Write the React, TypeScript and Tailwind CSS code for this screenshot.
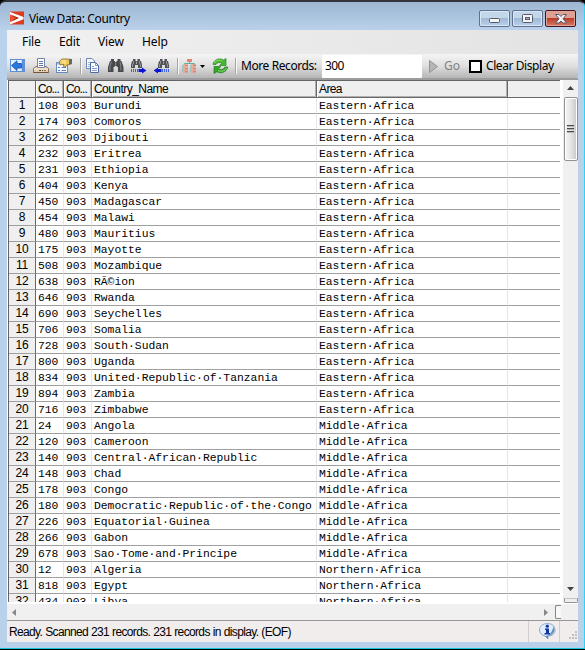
import React from "react";

const rows: [string, string, string][] = [
  ["108", "Burundi", "Eastern·Africa"],
  ["174", "Comoros", "Eastern·Africa"],
  ["262", "Djibouti", "Eastern·Africa"],
  ["232", "Eritrea", "Eastern·Africa"],
  ["231", "Ethiopia", "Eastern·Africa"],
  ["404", "Kenya", "Eastern·Africa"],
  ["450", "Madagascar", "Eastern·Africa"],
  ["454", "Malawi", "Eastern·Africa"],
  ["480", "Mauritius", "Eastern·Africa"],
  ["175", "Mayotte", "Eastern·Africa"],
  ["508", "Mozambique", "Eastern·Africa"],
  ["638", "RÃ©ion", "Eastern·Africa"],
  ["646", "Rwanda", "Eastern·Africa"],
  ["690", "Seychelles", "Eastern·Africa"],
  ["706", "Somalia", "Eastern·Africa"],
  ["728", "South·Sudan", "Eastern·Africa"],
  ["800", "Uganda", "Eastern·Africa"],
  ["834", "United·Republic·of·Tanzania", "Eastern·Africa"],
  ["894", "Zambia", "Eastern·Africa"],
  ["716", "Zimbabwe", "Eastern·Africa"],
  ["24", "Angola", "Middle·Africa"],
  ["120", "Cameroon", "Middle·Africa"],
  ["140", "Central·African·Republic", "Middle·Africa"],
  ["148", "Chad", "Middle·Africa"],
  ["178", "Congo", "Middle·Africa"],
  ["180", "Democratic·Republic·of·the·Congo", "Middle·Africa"],
  ["226", "Equatorial·Guinea", "Middle·Africa"],
  ["266", "Gabon", "Middle·Africa"],
  ["678", "Sao·Tome·and·Principe", "Middle·Africa"],
  ["12", "Algeria", "Northern·Africa"],
  ["818", "Egypt", "Northern·Africa"],
  ["434", "Libya", "Northern·Africa"],
];

const svgProps = { className: "block shrink-0", shapeRendering: "geometricPrecision" as const };

function Logo() {
  return (
    <svg {...svgProps} width="15" height="15" viewBox="0 0 15 15">
      <rect x="0" y="0.5" width="14" height="13" fill="#dd3a22" />
      <path d="M0 1L5 7L0 13Z" fill="#f0693c" />
      <path d="M0.5 2.2L12.2 7L0.5 12.4L4.6 7.2Z" fill="#9e1f12" />
      <path d="M0 1L13.5 6V8.2L0 13.5V11.3L9 7.1L0 3.2Z" fill="#fff" />
      <path d="M0 4L6.5 7.1L0 10.6Z" fill="#e8502e" />
    </svg>
  );
}

function BackIcon() {
  return (
    <svg {...svgProps} width="16" height="14" viewBox="0 0 16 14">
      <rect x="0.5" y="0.5" width="14" height="12" fill="#a9cbf2" stroke="#5b8fd6" />
      <rect x="12" y="1" width="3" height="12" fill="#5f8fdc" />
      <rect x="1" y="1" width="10.5" height="11" fill="#e3effb" />
      <path d="M1.5 6.5L7 1.8V4.5H11.5V9H7V11.6Z" fill="#2878dc" stroke="#1454a8" strokeWidth="0.8" />
    </svg>
  );
}

function PrinterIcon() {
  return (
    <svg {...svgProps} width="17" height="16" viewBox="0 0 17 16">
      <path d="M3 8.5H13L15.5 10.5V14.5H.5V10.5Z" fill="#e2cfb4" stroke="#87705c" />
      <path d="M4.5 9.5V.5H11.5V9.5Z" fill="#fff" stroke="#7484ad" />
      <path d="M6 3.5H10M6 5.5H10M6 7.5H10" stroke="#6377ac" />
      <path d="M1 11H15" stroke="#fff5df" />
      <path d="M.5 14.5H15.5" stroke="#71533d" />
      <path d="M6 12.5H8M9 12.5H10" stroke="#5b4b3c" />
      <rect x="11" y="12" width="2" height="1" fill="#c55a31" />
    </svg>
  );
}

function PropertiesIcon() {
  return (
    <svg {...svgProps} width="17" height="16" viewBox="0 0 17 16">
      <rect x=".5" y="4.5" width="11" height="10" fill="#f6faff" stroke="#6689be" />
      <path d="M1 5.5H11" stroke="#93b5e8" strokeWidth="2" />
      <path d="M2 9.5H4M5.5 9.5H10M2 12.5H4M5.5 12.5H10" stroke="#5281c9" />
      <path d="M3 4L6 1H11L15.5 1.5V6L11 7L9 9L7 8L8 6L4 7Z" fill="#f0c65f" stroke="#876936" strokeWidth=".8" />
      <path d="M5 3H10M6 5H10" stroke="#fff1a7" />
      <path d="M13 1H16V6H13Z" fill="#606c68" />
    </svg>
  );
}

function CopyIcon() {
  return (
    <svg {...svgProps} width="15" height="16" viewBox="0 0 15 16">
      <path d="M.5.5H6L8.5 3V10.5H.5Z" fill="#f4f8ff" stroke="#6d84b4" />
      <path d="M2 4.5H5M2 6.5H5M2 8.5H4" stroke="#9fb2d8" />
      <path d="M4.5 4.5H9.5L12.5 7.5V14.5H4.5Z" fill="#f8fbff" stroke="#50699f" />
      <path d="M9.5 4.5V7.5H12.5M6 8.5H8M6 10.5H11M6 12.5H11" fill="none" stroke="#8299c8" />
    </svg>
  );
}

function BinocularsIcon() {
  return (
    <svg {...svgProps} width="16" height="15" viewBox="0 0 16 15">
      <path d="M3 0H6V2H7V3H8.5V2H9.5V0H12.5V2H13.5L15.5 8V13H10V8H8.8V7H6.7V8H5.5V13H0V8L2 2H3Z" fill="#47494d" />
      <path d="M3.5 2.5L2 7V11.5M12 2.5L12.8 7V11.5" fill="none" stroke="#85888c" />
      <path d="M7.7 3.5V6.5" stroke="#8d9095" />
    </svg>
  );
}

function SmallBinoculars() {
  return (
    <g>
      <path d="M2 0H4.5V2H6.5V0H9V2H10L11 6V9H7V6H4V9H0V6L1 2H2Z" fill="#505256" />
      <path d="M2.5 2V4L1.5 6V8M8.5 2V4L9.5 6V8" fill="none" stroke="#a5a8ac" strokeWidth=".8" />
      <path d="M5.5 2.5V5" stroke="#b4b6ba" strokeWidth=".8" />
    </g>
  );
}

function SeekIcon({ back = false }: { back?: boolean }) {
  return (
    <svg {...svgProps} width="16" height="16" viewBox="0 0 16 16">
      <g transform={back ? "translate(4 1)" : "translate(0 1)"}><SmallBinoculars /></g>
      <g transform={back ? "translate(15 0) scale(-1 1)" : undefined}>
        <path d="M0 11H1V14H0ZM2 11H3V14H2ZM4 11H5V14H4ZM6 11H7V14H6Z" fill="#3f63dc" />
        <path d="M7.500 11H11V9.500L15.500 12.500L11 15.500V14H7.500Z" fill="#0b16cf" />
      </g>
    </svg>
  );
}

function TreeIcon() {
  return (
    <svg {...svgProps} width="16" height="15" viewBox="0 0 16 15">
      <path d="M7.5 2V4.5M2.5 6V4.5H12.500V6" fill="none" stroke="#58b4a0" />
      <rect x="5" y="0" width="5" height="3" fill="#e98376" />
      <path d="M1 6.5H6M1 9.5H6M1 12.5H6M9 6.5H14M9 9.5H14M9 12.5H14" stroke="#e28078" strokeWidth="2" />
      <path d="M1 6.5H3M1 9.5H3M1 12.5H3M9 6.5H11M9 9.5H11M9 12.5H11" stroke="#f1ad9a" strokeWidth="2" />
      <path d="M.5 6V13M8.5 6V13" stroke="#8abfb1" strokeWidth=".8" />
    </svg>
  );
}

function RefreshIcon() {
  return (
    <svg {...svgProps} width="17" height="16" viewBox="0 0 17 16">
      <path d="M1 6.5C1.5 2 7-.8 11.5 2L14 .6V7.5H7.5L9.8 5.3C7.5 3.8 5 4.5 4 6.5Z" fill="#43b72d" stroke="#258a25" strokeWidth=".7" />
      <path d="M15.8 9C15 13.5 9.5 16.5 5 13.7L2 15.5V8.5H8.8L6.5 10.6C9 12.2 11.8 11.5 12.8 9Z" fill="#35a428" stroke="#1d7d22" strokeWidth=".7" />
      <path d="M2.5 5C4 2 8 1.3 10.5 3.3M14.5 10C13 13 9 14 6 12.5" fill="none" stroke="#93df70" />
    </svg>
  );
}

function Separator() {
  return <div className="h-4 w-0.5 shrink-0 border-l border-[#a4a4a4] bg-[#fafafa]" />;
}

function Toolbar() {
  return (
    <div className="flex h-6 shrink-0 items-center overflow-hidden rounded-br-[3px] bg-linear-to-b from-[#f5f5f5] via-[#dfdfdf] to-[#b5b5b5] pl-[3px] font-['Noto_Sans','Open_Sans',sans-serif] text-[12px]">
      <BackIcon />
      <div className="ml-[7px]"><PrinterIcon /></div>
      <div className="ml-1.5"><PropertiesIcon /></div>
      <div className="ml-[7px]"><Separator /></div>
      <div className="ml-1"><CopyIcon /></div>
      <div className="ml-[7px]"><BinocularsIcon /></div>
      <div className="ml-[7px]"><SeekIcon /></div>
      <div className="ml-[7px]"><SeekIcon back /></div>
      <div className="ml-[7px]"><Separator /></div>
      <div className="ml-[3px]"><TreeIcon /></div>
      <svg className="ml-0.5 block shrink-0" width="5" height="3" viewBox="0 0 5 3"><path d="M0 0H5L2.5 3Z" fill="#000" /></svg>
      <div className="ml-[7px]"><RefreshIcon /></div>
      <div className="ml-1.5"><Separator /></div>
      <span className="ml-[4px] w-[81px] whitespace-nowrap tracking-[-0.42px]">More Records:</span>
      <div className="flex h-[23px] w-[100px] shrink-0 items-center bg-white pl-[3px] tracking-[-0.6px]">300</div>
      <svg className="ml-[7px] block shrink-0" width="10" height="13" viewBox="0 0 10 13"><path d="M.5.5L8.5 6.5L.5 12.5Z" fill="#b5b5b5" stroke="#949494" /></svg>
      <span className="ml-[5px] w-[25px] text-[#838383]">Go</span>
      <div className="size-[13px] shrink-0 border-2 border-black bg-white" />
      <span className="ml-1 whitespace-nowrap tracking-[-0.42px]">Clear Display</span>
    </div>
  );
}

function WindowButton({ kind }: { kind: "min" | "max" | "close" }) {
  const close = kind === "close";
  return (
    <div className={close
      ? "flex h-[17px] w-[31px] items-center justify-center rounded-[2px] border border-[#431422] bg-linear-to-b from-[#dba294] from-45% via-[#b93c2b] via-50% to-[#d77a63] shadow-[inset_0_0_0_1px_#e2a397]"
      : "flex h-[17px] w-[31px] items-center justify-center rounded-[2px] border border-[#61718f] bg-linear-to-b from-[#c3d7eb] from-45% via-[#a0bad6] via-50% to-[#b8d2ed] shadow-[inset_0_0_0_1px_#d7e7f7]"}>
      {kind === "min" && <svg {...svgProps} width="12" height="11" viewBox="0 0 12 11"><rect x=".5" y="5.5" width="10" height="4" rx="1" fill="#f5f5f5" stroke="#535b6b" /></svg>}
      {kind === "max" && <svg {...svgProps} width="12" height="10" viewBox="0 0 12 10"><rect x=".5" y=".5" width="10" height="8" rx="1" fill="#f5f5f5" stroke="#535b6b" /><rect x="3.5" y="3.5" width="4" height="2" fill="#a1bbd8" stroke="#535b6b" /></svg>}
      {close && <svg {...svgProps} width="12" height="10" viewBox="0 0 12 10"><path d="M.5.5H4L6 2.5L8 .5H11.5L8 4.8L11.5 9H8L6 7L4 9H.5L4 4.8Z" fill="#f5f5f5" stroke="#535b6b" /></svg>}
    </div>
  );
}

const gridCols = "grid grid-cols-[27px_28px_28px_225px_191px_52px]";

const headers = [
  { label: "Co...", spacing: "tracking-[-0.9px]" },
  { label: "Co...", spacing: "tracking-[-0.9px]" },
  { label: "Country_Name", spacing: "tracking-[-0.55px]" },
  { label: "Area", spacing: "tracking-[-0.6px]" },
];

function DataGrid() {
  return (
    <div className="flex h-[522px] w-[552px] flex-col overflow-hidden border-l border-t border-[#646464] bg-white">
      <div className={gridCols + " h-[17px] shrink-0 border-b border-[#686868] bg-[#efefef] font-['Liberation_Sans',Arial,sans-serif] text-[12px] leading-4"}>
        <div className="border-r border-[#686868]" />
        {headers.map(({ label, spacing }, i) => (
          <div key={i} className={"overflow-hidden whitespace-nowrap border-l border-r border-l-white border-r-[#686868] pl-px shadow-[inset_-1px_-1px_0_#b0b0b0] " + spacing}>{label}</div>
        ))}
        <div />
      </div>
      {rows.map(([code, country, area], i) => (
        <div key={code} className={gridCols + " h-4 shrink-0 font-['Liberation_Mono','Courier_New',monospace] text-[11.35px] leading-[17px]"}>
          <div className="border-b border-r border-b-[#a0a0a0] border-r-[#686868] bg-[#efefef] text-center font-['Liberation_Sans',Arial,sans-serif] text-[12px] leading-[15px] tracking-[-0.2px]">{i + 1}</div>
          {[code, "903", country, area].map((value, j) => (
            <div key={j} className="h-4 whitespace-pre border-b border-r border-b-[#a0a0a0] border-r-[#e6e6e6] pl-0.5">{value}</div>
          ))}
          <div className="border-b border-[#a0a0a0]" />
        </div>
      ))}
    </div>
  );
}

function VerticalScrollbar() {
  return (
    <div className="flex h-[523px] w-[15px] flex-col items-center bg-[#f0f0f0]">
      <svg className="mt-1.5 block shrink-0" width="7" height="4" viewBox="0 0 7 4"><path d="M3.5 0L7 4H0Z" fill="#424242" /></svg>
      <div className="mt-[7px] flex h-16 w-[14px] shrink-0 flex-col items-center justify-center gap-px rounded-[2px] border border-[#929292] bg-linear-to-r from-[#f7f7f7] via-[#e4e4e4] to-[#c6c6cb] shadow-[inset_0_0_0_1px_#fff]">
        {[0, 1, 2].map((n) => <div key={n} className="h-0.5 w-[7px] border-t border-[#4c4c4c] bg-[#b5b5b5]" />)}
      </div>
      <svg className="mt-auto block" width="7" height="4" viewBox="0 0 7 4"><path d="M0 0H7L3.5 4Z" fill="#424242" /></svg>
      <div className="mt-[7px] h-[5px] w-[14px] rounded-b-[2px] border border-[#929292] border-t-[#c4c4c4] bg-[#eee]" />
    </div>
  );
}

function InfoIcon() {
  return (
    <svg {...svgProps} width="17" height="17" viewBox="0 0 17 17">
      <path d="M8.5 .5C3.5.5.5 3.5.5 7C.5 10 3 12.5 6 13L9 16V13C13.5 13 16 10.5 16 7C16 3 13 .5 8.5.5Z" fill="#e0eefb" stroke="#94a9c3" />
      <path d="M14.5 3.5C17 8 14 12 9 13V16L6 13C10 13 13 10 14.5 3.5Z" fill="#5c8dc0" />
      <circle cx="8.3" cy="3.2" r="1.6" fill="#1235a6" />
      <path d="M6 5.5H10V10H11V11.5H5.5V10H7V7H6Z" fill="#1235a6" />
    </svg>
  );
}

function ResizeGrip() {
  return (
    <svg {...svgProps} width="9" height="9" viewBox="0 0 9 9">
      <path d="M7 1H9M4 4H6M7 4H9M1 7H3M4 7H6M7 7H9" stroke="#b8b3b3" strokeWidth="1.6" />
    </svg>
  );
}

export default function App() {
  return (
    <div className="h-[650px] w-[585px] overflow-hidden bg-black text-black">
      <div className="flex h-[649px] w-[585px] flex-col overflow-hidden rounded-t-[6px] border-b border-r border-t-2 border-b-[#18c6dc] border-r-[#2ed3f3] border-t-[#34323a] bg-linear-to-b from-[#9db6d2] via-[#b9d1ea] via-[28px] to-[#b9d1ea] pb-[5px] pl-[7px] pr-[6px]">
        <header className="flex h-7 shrink-0 items-start">
          <div className="ml-[3px] mt-[9px]"><Logo /></div>
          <span className="ml-[4px] mt-[8px] whitespace-nowrap font-['Noto_Sans','Open_Sans',sans-serif] text-[12px] leading-[18px] tracking-[-0.36px]">View Data: Country</span>
          <div className="ml-auto mr-[2px] mt-2 flex gap-0.5">
            <WindowButton kind="min" /><WindowButton kind="max" /><WindowButton kind="close" />
          </div>
        </header>
        <nav className="flex h-6 shrink-0 items-center bg-linear-to-r from-[#f1f1f1] to-[#e3e3e3] pl-[15px] font-['Noto_Sans','Open_Sans',sans-serif] text-[12px] tracking-[-0.1px]">
          <span className="w-[37px]">File</span><span className="w-[39px]">Edit</span><span className="w-[44px]">View</span><span>Help</span>
        </nav>
        <Toolbar />
        <main className="flex h-[526px] shrink-0 bg-white pl-px pt-0.5 shadow-[inset_0_2px_0_#9c9c9c]">
          <DataGrid />
          <div className="ml-[3px]"><VerticalScrollbar /></div>
        </main>
        <div className="flex h-4 shrink-0 items-center bg-[#f0f0f0] pl-[5px]">
          <svg className="block" width="5" height="7" viewBox="0 0 5 7"><path d="M0 3.5L4 0V7Z" fill="#888" /></svg>
          <svg className="ml-auto block" width="5" height="7" viewBox="0 0 5 7"><path d="M4 3.5L0 0V7Z" fill="#888" /></svg>
          <div className="ml-[6px] mr-[17px] h-[14px] w-[6px] rounded-l-[2px] border-y border-l border-[#858585] bg-[#f8f8f8]" />
        </div>
        <footer className="flex h-[22px] shrink-0 items-stretch border-t border-[#969696] bg-[#f1edec] font-['Liberation_Sans',Arial,sans-serif] text-[12px]">
          <div className="flex w-[522px] items-center whitespace-nowrap border-r border-[#d4cfcf] pl-0.5 tracking-[-0.65px] [word-spacing:0.3px]">Ready. Scanned 231 records. 231 records in display. (EOF)</div>
          <div className="flex w-[31px] items-center justify-center border-r border-[#d4cfcf] pl-1.5"><InfoIcon /></div>
          <div className="ml-auto mr-px self-end pb-0.5"><ResizeGrip /></div>
        </footer>
      </div>
    </div>
  );
}
